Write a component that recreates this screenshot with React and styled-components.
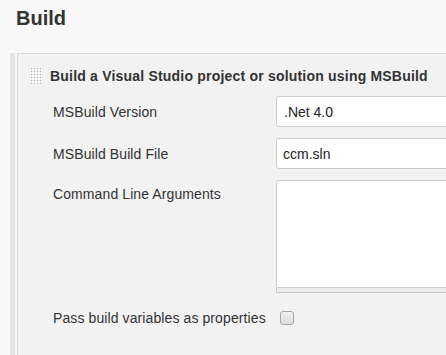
import React from "react";
import styled, { createGlobalStyle } from "styled-components";

const Global = createGlobalStyle`
  html, body { margin: 0; padding: 0; overflow: hidden; }
  body {
    background: #f8f8f8;
    font-family: "Liberation Sans", Arial, sans-serif;
    color: #333;
    width: 446px;
    height: 355px;
  }
`;

const Page = styled.div`
  width: 446px;
  height: 355px;
  overflow: hidden;
`;

const Heading = styled.h2`
  margin: 0;
  padding: 7px 0 0 16px;
  height: 46px;
  box-sizing: border-box;
  font-size: 20px;
  font-weight: bold;
  color: #333;
  line-height: 23px;
`;

const Section = styled.div`
  margin: 7px 0 0 10px;
  border-left: 5px solid #e3e3e3;
  padding-left: 2px;
  height: 400px;
`;

const Panel = styled.div`
  width: 600px;
  height: 100%;
  background: #f2f2f2;
  border-top: 1px solid #d9d9d9;
  border-left: 1px solid #d9d9d9;
  box-sizing: border-box;
  padding: 12px 0 0 12px;
`;

const Header = styled.div`
  display: flex;
  align-items: flex-start;
  gap: 8px;
  height: 30px;
`;

const Handle = styled.div`
  width: 12px;
  height: 17px;
  background-color: #fff;
  background-image: radial-gradient(circle, #b8b8b8 0.8px, transparent 1.1px);
  background-size: 3px 3px;
  background-position: 0 0;
  margin-top: 1px;
`;

const Title = styled.div`
  font-size: 14px;
  font-weight: bold;
  letter-spacing: 0.2px;
  color: #333;
  line-height: 20px;
`;

const Form = styled.div`
  display: grid;
  grid-template-columns: 223px 300px;
  row-gap: 11px;
  padding-left: 23px;
`;

const Label = styled.div`
  font-size: 14px;
  letter-spacing: 0.1px;
  color: #333;
  display: flex;
  align-items: ${(p) => (p.$top ? "flex-start" : "center")};
  padding-top: ${(p) => (p.$top ? "6px" : "0")};
  line-height: 16px;
`;

const Field = styled.div`
  height: 31px;
  box-sizing: border-box;
  background: #fff;
  border: 1px solid #ccc;
  border-radius: 3px;
  font-size: 14px;
  color: #222;
  display: flex;
  align-items: center;
  padding-left: ${(p) => p.$pad || "6px"};
`;

const AreaWrap = styled.div`
  display: flex;
  flex-direction: column;
`;

const Area = styled.div`
  height: 108px;
  box-sizing: border-box;
  background: #fff;
  border: 1px solid #ccc;
  border-radius: 3px 3px 0 0;
`;

const Grip = styled.div`
  height: 5px;
  box-sizing: border-box;
  background: #ececec;
  border-left: 1px solid #c8c8c8;
  border-bottom: 1px solid #c8c8c8;
`;

const CheckCell = styled.div`
  display: flex;
  align-items: center;
  padding-left: 4px;
  height: 28px;
`;

const Check = styled.span`
  width: 12px;
  height: 12px;
  border: 1px solid #a6a6a6;
  border-radius: 3px;
  background: linear-gradient(#f0f0f0, #dcdcdc);
  display: inline-block;
`;

const CheckLabel = styled(Label)`
  height: 28px;
`;

export default function App() {
  return (
    <Page>
      <Global />
      <Heading>Build</Heading>
      <Section>
        <Panel>
          <Header>
            <Handle />
            <Title>Build a Visual Studio project or solution using MSBuild</Title>
          </Header>
          <Form>
            <Label>MSBuild Version</Label>
            <Field $pad="7px">.Net 4.0</Field>
            <Label>MSBuild Build File</Label>
            <Field>ccm.sln</Field>
            <Label $top>Command Line Arguments</Label>
            <AreaWrap>
              <Area />
              <Grip />
            </AreaWrap>
            <CheckLabel>Pass build variables as properties</CheckLabel>
            <CheckCell>
              <Check />
            </CheckCell>
          </Form>
        </Panel>
      </Section>
    </Page>
  );
}
